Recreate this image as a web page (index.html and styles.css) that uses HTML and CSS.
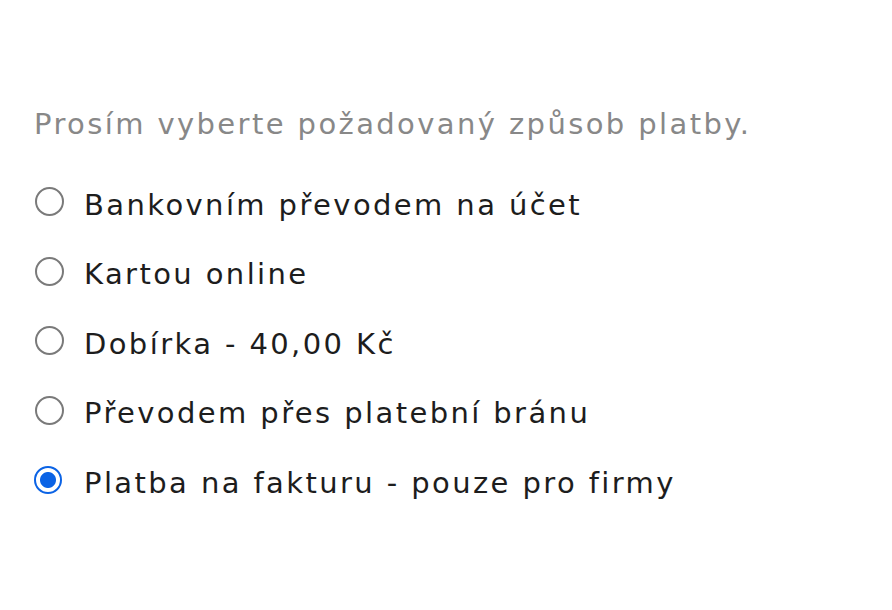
FILE: index.html
```html
<!DOCTYPE html>
<html lang="cs">
<head>
<meta charset="utf-8">
<link rel="stylesheet" href="styles.css">
</head>
<body>
<div class="payment">
  <p class="intro">Prosím vyberte požadovaný způsob platby.</p>
  <ul class="options">
    <li class="option"><span class="radio"></span><span class="label">Bankovním převodem na účet</span></li>
    <li class="option"><span class="radio"></span><span class="label">Kartou online</span></li>
    <li class="option"><span class="radio"></span><span class="label">Dobírka - 40,00 Kč</span></li>
    <li class="option"><span class="radio"></span><span class="label">Převodem přes platební bránu</span></li>
    <li class="option"><span class="radio checked"></span><span class="label">Platba na fakturu - pouze pro firmy</span></li>
  </ul>
</div>
</body>
</html>
```
FILE: styles.css
```css
html, body {
  margin: 0;
  padding: 0;
  background: #ffffff;
}
body {
  font-family: "DejaVu Sans", sans-serif;
}
.payment {
  padding: 104px 0 0 34px;
}
.intro {
  margin: 0;
  font-size: 29px;
  line-height: 40px;
  color: #888888;
  letter-spacing: 2.4px;
}
.options {
  list-style: none;
  margin: 26px 0 0 0;
  padding: 0;
}
.option {
  display: flex;
  align-items: center;
  height: 69.5px;
}
.radio {
  box-sizing: border-box;
  width: 29px;
  height: 29px;
  border-radius: 50%;
  border: 2px solid #7a7a7a;
  margin: -6px 20px 0 1px;
  flex: none;
}
.radio.checked {
  border: 2.5px solid #0b63e5;
  background: radial-gradient(circle, #0b63e5 0 7.5px, #ffffff 8.5px);
  width: 28px;
  height: 28px;
  margin-left: 0;
  margin-right: 22px;
}
.label {
  font-size: 29px;
  color: #1d1d1d;
  letter-spacing: 2.4px;
}
```
